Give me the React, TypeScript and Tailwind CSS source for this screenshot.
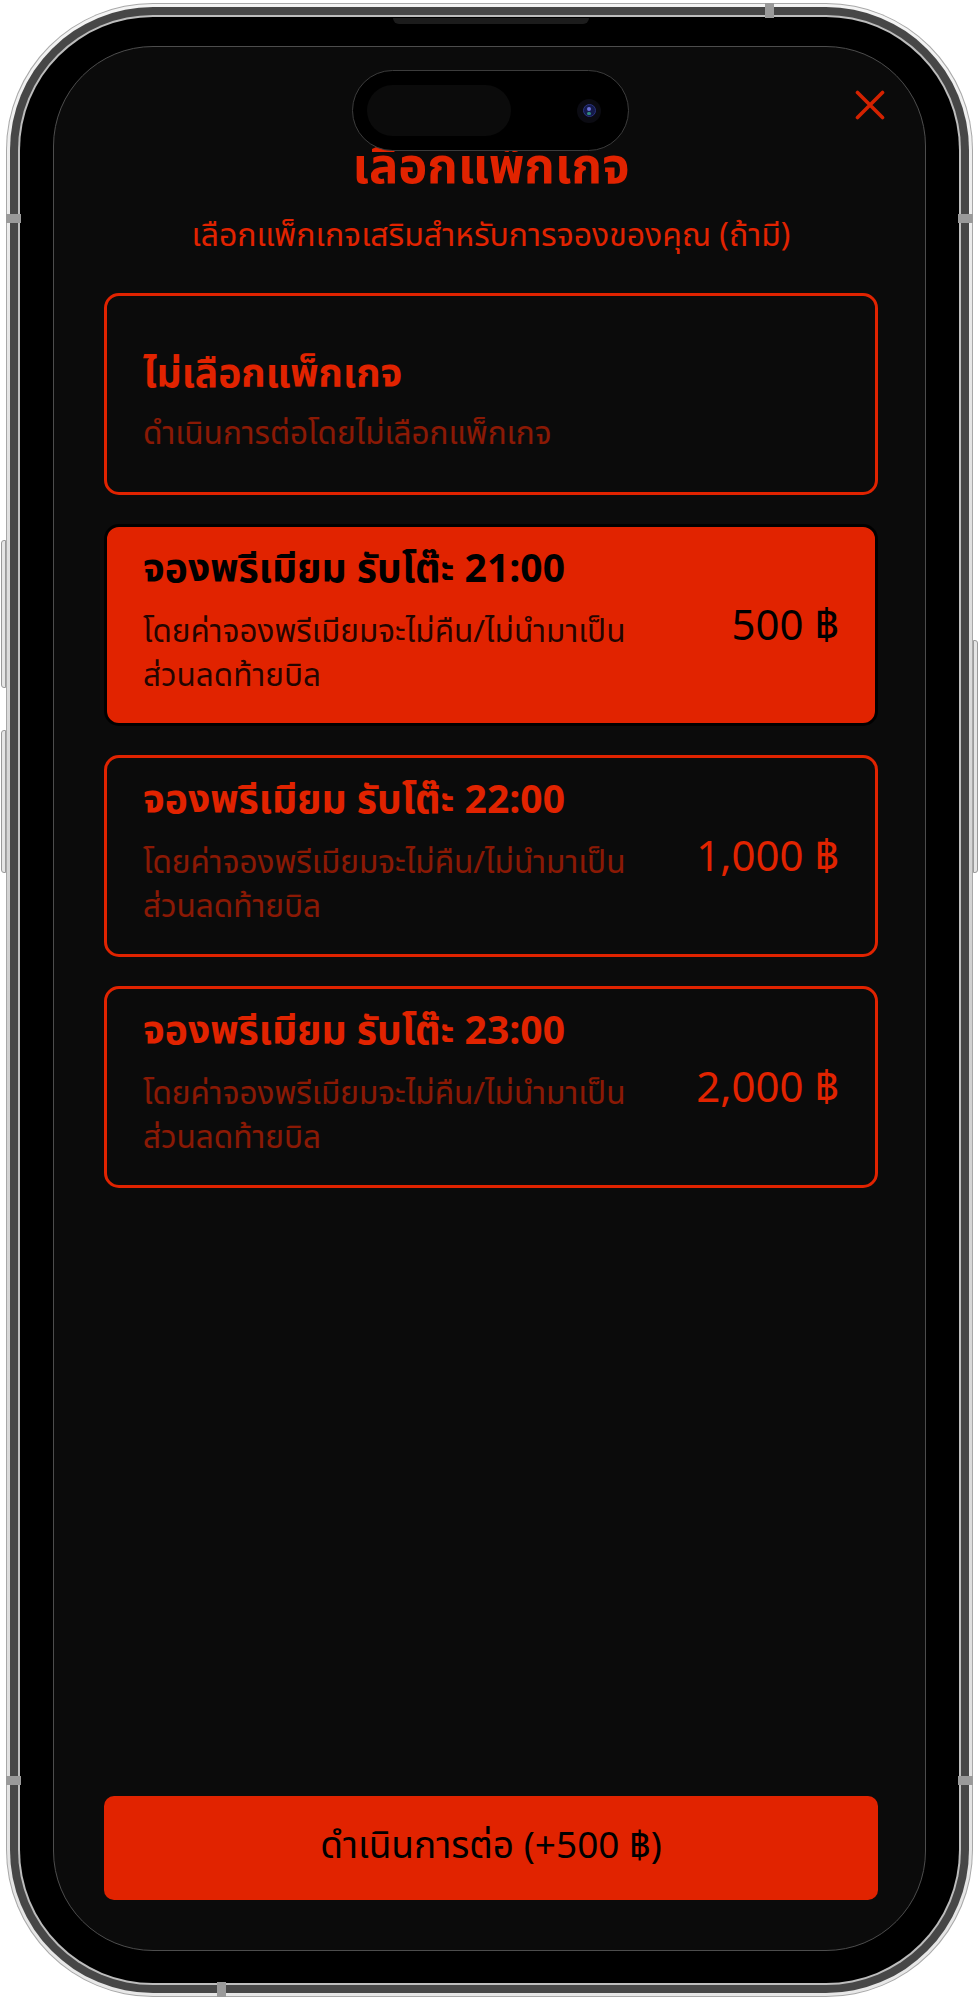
import React, { useState } from 'react';

type Pkg = {
  id: string;
  title: string;
  price: string;
};

const packages: Pkg[] = [
  { id: '21', title: 'จองพรีเมียม รับโต๊ะ 21:00', price: '500 ฿' },
  { id: '22', title: 'จองพรีเมียม รับโต๊ะ 22:00', price: '1,000 ฿' },
  { id: '23', title: 'จองพรีเมียม รับโต๊ะ 23:00', price: '2,000 ฿' },
];

const PackageCard = ({ pkg, active, onSelect }: { pkg: Pkg; active: boolean; onSelect: () => void }) => {
  return (
    <button
      onClick={onSelect}
      className={`h-[202px] w-full text-left border-[3px] rounded-[15px] px-[36px] ${
        active ? 'bg-[#e12300] border-black' : 'bg-[#0b0b0b] border-[#e12300]'
      }`}
    >
      <div className={`text-[39px] leading-[38px] font-bold ${active ? 'text-black' : 'text-[#e12300]'}`}>
        {pkg.title}
      </div>
      <div className="flex items-start justify-between mt-[21px]">
        <div className={`text-[31.5px] leading-[44px] ${active ? 'text-black/85' : 'text-[#e12300]/60'}`}>
          <div>โดยค่าจองพรีเมียมจะไม่คืน/ไม่นำมาเป็น</div>
          <div>ส่วนลดท้ายบิล</div>
        </div>
        <div className={`text-[42px] leading-[32px] ${active ? 'text-black' : 'text-[#e12300]'}`}>{pkg.price}</div>
      </div>
    </button>
  );
};

export default function App() {
  const [selected, setSelected] = useState<string>('21');
  const current = packages.find((p) => p.id === selected);
  const extra = current ? current.price.replace(' ฿', '') : '0';

  return (
    <div className="w-[978px] h-[2000px] bg-white pt-[3px] pl-[6px] font-['Noto_Sans_Thai','Noto_Sans',sans-serif]">
      <div className="relative w-[967px] h-[1994px]">
        {/* side buttons */}
        <div className="absolute left-[-5px] top-[537px] w-[5px] h-[148px] rounded-l-[3px] bg-[#e6e6e6] border border-[#9a9a9a]"></div>
        <div className="absolute left-[-5px] top-[727px] w-[5px] h-[143px] rounded-l-[3px] bg-[#e6e6e6] border border-[#9a9a9a]"></div>
        <div className="absolute right-[-5px] top-[637px] w-[5px] h-[233px] rounded-r-[3px] bg-[#e6e6e6] border border-[#9a9a9a]"></div>

        {/* antenna bands */}
        <div className="absolute left-[759px] top-0 w-[9px] h-[15px] bg-[#9a9a9a] z-10"></div>
        <div className="absolute left-[211px] bottom-0 w-[9px] h-[15px] bg-[#9a9a9a] z-10"></div>
        <div className="absolute left-0 top-[211px] w-[15px] h-[9px] bg-[#9a9a9a] z-10"></div>
        <div className="absolute left-0 top-[1773px] w-[15px] h-[9px] bg-[#9a9a9a] z-10"></div>
        <div className="absolute right-0 top-[211px] w-[15px] h-[9px] bg-[#9a9a9a] z-10"></div>
        <div className="absolute right-0 top-[1773px] w-[15px] h-[9px] bg-[#9a9a9a] z-10"></div>

        <div className="h-full rounded-[147px] bg-[#a8a8a8] p-[1px]">
          <div className="h-full rounded-[146px] bg-gradient-to-b from-[#f4f4f4] via-[#cfcfcf] to-[#e8e8e8] p-[3px]">
            <div className="h-full rounded-[143px] bg-[#474747] p-[8px]">
              <div className="h-full rounded-[135px] bg-[#bdbdbd] p-[2px]">
                <div className="relative h-full rounded-[133px] bg-black pt-[29px] px-[33px] pb-[32px]">
                  {/* speaker slot */}
                  <div className="absolute left-[373px] top-[1px] w-[196px] h-[6px] rounded-b-[6px] bg-[#1c1c1c]"></div>

                  <div className="relative h-full rounded-[100px] border border-[#4d4d4d] bg-[#0b0b0b] flex flex-col pl-[50px] pr-[47px]">
                    {/* dynamic island */}
                    <div className="absolute left-[298px] top-[23px] w-[277px] h-[81px] rounded-full bg-black border border-[#3c3c3c] z-10 flex items-center justify-between pl-[14px] pr-[27px]">
                      <div className="w-[144px] h-[51px] rounded-full bg-[#0b0b0b]"></div>
                      <div className="w-[24px] h-[24px] rounded-full bg-[#0b0b12] flex items-center justify-center">
                        <div className="w-[13px] h-[13px] rounded-full bg-[#141a4a] border border-[#2a3380] flex flex-col items-center justify-center gap-[1px]">
                          <div className="w-[4px] h-[4px] rounded-full bg-[#6a70d8]"></div>
                          <div className="w-[4px] h-[3px] rounded-full bg-[#2f8a7a]"></div>
                        </div>
                      </div>
                    </div>

                    {/* close */}
                    <button className="absolute left-[801px] top-[43px] w-[30px] h-[30px]">
                      <svg viewBox="0 0 30 30" width="30" height="30">
                        <path d="M2.5 2.5 L27.5 27.5 M27.5 2.5 L2.5 27.5" stroke="#d42200" strokeWidth="3.6" strokeLinecap="round" />
                      </svg>
                    </button>

                    <h1 className="pt-[91px] text-center text-[49px] leading-[60px] font-bold text-[#e12300]">เลือกแพ็กเกจ</h1>
                    <p className="mt-[18px] text-center text-[32px] leading-[40px] text-[#e12300]">
                      เลือกแพ็กเกจเสริมสำหรับการจองของคุณ (ถ้ามี)
                    </p>

                    <div className="mt-[37px] flex flex-col gap-[29px]">
                      <button
                        onClick={() => setSelected('')}
                        className={`h-[202px] w-full text-left border-[3px] rounded-[15px] px-[36px] pt-[21px] ${
                          selected === '' ? 'bg-[#e12300] border-black' : 'bg-[#0b0b0b] border-[#e12300]'
                        }`}
                      >
                        <div className={`text-[39px] leading-[48px] font-bold ${selected === '' ? 'text-black' : 'text-[#e12300]'}`}>
                          ไม่เลือกแพ็กเกจ
                        </div>
                        <div className={`mt-[13px] text-[31.5px] leading-[44px] ${selected === '' ? 'text-black/85' : 'text-[#e12300]/60'}`}>
                          ดำเนินการต่อโดยไม่เลือกแพ็กเกจ
                        </div>
                      </button>
                      {packages.map((p) => (
                        <PackageCard key={p.id} pkg={p} active={selected === p.id} onSelect={() => setSelected(p.id)} />
                      ))}
                    </div>

                    <div className="flex-1"></div>

                    <button className="mb-[50px] h-[104px] w-full rounded-[10px] bg-[#e12300] text-black text-[37px]">
                      ดำเนินการต่อ (+{extra} ฿)
                    </button>
                  </div>
                </div>
              </div>
            </div>
          </div>
        </div>
      </div>
    </div>
  );
}
